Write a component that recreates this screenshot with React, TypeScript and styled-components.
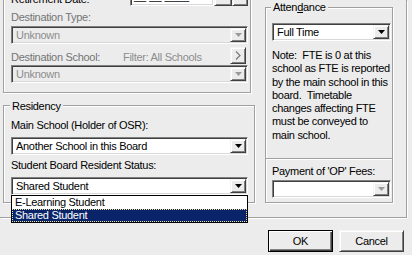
import styled, { createGlobalStyle, css } from "styled-components";

const FACE = "#ECECEC";
const ETCH = "#A0A0A0";
const DISABLED = "#8C8C8C";

const GlobalStyle = createGlobalStyle`
  html, body {
    margin: 0;
    padding: 0;
    background: ${FACE};
    overflow: hidden;
  }
  body {
    font-family: "Liberation Sans", Arial, sans-serif;
    font-size: 11px;
    line-height: 13px;
    letter-spacing: -0.3px;
    color: #000;
  }
`;

const Dialog = styled.div`
  display: flex;
  flex-direction: column;
  width: 412px;
  height: 255px;
  overflow: hidden;
`;

const TabPage = styled.div`
  display: flex;
  align-items: flex-start;
  box-sizing: border-box;
  width: 407px;
  height: 218px;
  border-right: 1px solid ${ETCH};
  border-bottom: 1px solid ${ETCH};
  box-shadow: 1px 1px 0 #fff;
`;

const LeftColumn = styled.div`
  display: flex;
  flex-direction: column;
  align-items: flex-start;
  gap: 12px;
  margin-left: 3px;
`;

const GroupBox = styled.div<{ $width: number }>`
  display: flex;
  flex-direction: column;
  align-items: flex-start;
  box-sizing: border-box;
  width: ${(p) => p.$width}px;
  border: 1px solid ${ETCH};
  box-shadow: inset 1px 1px 0 #fff, 1px 1px 0 #fff;
`;

const UpperGroup = styled(GroupBox)`
  margin-top: -30px;
  padding: 15px 0 9px 7px;
`;

const ResidencyGroup = styled(GroupBox)`
  padding: 0 0 7px 7px;
`;

const RightGroup = styled(GroupBox)`
  height: 196px;
  margin: 7px 0 0 10px;
  padding: 0 0 4px 6px;
`;

const Legend = styled.span<{ $lift: number }>`
  margin: -${(p) => p.$lift}px 0 0 -1px;
  padding: 0 2px;
  background: ${FACE};
  white-space: nowrap;
`;

const Label = styled.span<{ $mt?: number; $tone?: "normal" | "dim" | "disabled" }>`
  display: block;
  margin-top: ${(p) => p.$mt ?? 0}px;
  white-space: nowrap;
  color: ${(p) =>
    p.$tone === "disabled" ? DISABLED : p.$tone === "dim" ? "#747474" : "#000"};
`;

const sunken = css`
  border: 1px solid;
  border-color: #808080 #fff #fff #808080;
  box-shadow: inset 1px 1px 0 #404040, inset -1px -1px 0 #d8d8d8;
`;

const raised = css`
  border: 1px solid;
  border-color: #f4f4f4 #404040 #404040 #f4f4f4;
  box-shadow: inset 1px 1px 0 #fff, inset -1px -1px 0 #808080;
`;

const RetirementRow = styled.div`
  display: flex;
  align-items: flex-end;
  height: 20px;
`;

const RetirementLabel = styled.span`
  width: 119px;
  white-space: nowrap;
`;

const DateField = styled.div`
  ${sunken};
  box-sizing: border-box;
  display: flex;
  align-items: center;
  width: 84px;
  height: 20px;
  padding-left: 3px;
  background: #fff;
  letter-spacing: 0;
`;

const SmallButton = styled.span<{ $w: number; $h: number }>`
  ${raised};
  box-sizing: border-box;
  display: flex;
  align-items: center;
  justify-content: center;
  width: ${(p) => p.$w}px;
  height: ${(p) => p.$h}px;
  background: ${FACE};
`;

const SchoolRow = styled.div`
  display: flex;
  align-items: flex-start;
  width: 237px;
  height: 18px;
  margin-top: 3px;
`;

const SchoolLabel = styled(Label)`
  width: 112px;
`;

const ChevronButton = styled(SmallButton)`
  margin: 0 2px 0 auto;
`;

const ComboFrame = styled.div<{ $w: number; $h: number; $mt?: number; $disabled?: boolean }>`
  ${sunken};
  position: relative;
  box-sizing: border-box;
  display: flex;
  align-items: stretch;
  width: ${(p) => p.$w}px;
  height: ${(p) => p.$h}px;
  margin-top: ${(p) => p.$mt ?? 0}px;
  padding: 1px;
  background: ${(p) => (p.$disabled ? FACE : "#fff")};
`;

const ComboText = styled.span<{ $disabled?: boolean }>`
  flex: 1;
  display: flex;
  align-items: center;
  padding-left: 3px;
  white-space: nowrap;
  color: ${(p) => (p.$disabled ? DISABLED : "#000")};
`;

const ComboButton = styled.span`
  ${raised};
  box-sizing: border-box;
  display: flex;
  align-items: center;
  justify-content: center;
  width: 16px;
  background: ${FACE};
`;

const DropList = styled.div`
  position: absolute;
  top: calc(100% + 1px);
  left: -1px;
  z-index: 5;
  box-sizing: border-box;
  width: 237px;
  border: 1px solid #000;
  background: #fff;
`;

const ListItem = styled.div<{ $selected?: boolean }>`
  height: 13px;
  padding-left: 3px;
  white-space: nowrap;
  ${(p) =>
    p.$selected &&
    css`
      background: #0a246a;
      color: #fff;
      outline: 1px dotted #f3e39a;
      outline-offset: -1px;
    `}
`;

const NoteText = styled.div`
  margin-top: 8px;
  line-height: 13.3px;
  white-space: pre;
`;

const Divider = styled.div`
  align-self: stretch;
  height: 0;
  margin: auto 0 0 -6px;
  border-top: 1px solid ${ETCH};
  border-bottom: 1px solid #fff;
`;

const ButtonRow = styled.div`
  display: flex;
  justify-content: flex-end;
  gap: 6px;
  margin-top: 12px;
  padding-right: 8px;
`;

const PushButton = styled.button<{ $default?: boolean }>`
  ${raised};
  box-sizing: border-box;
  width: 65px;
  height: 22px;
  padding: 0;
  background: ${FACE};
  color: #000;
  font: inherit;
  letter-spacing: inherit;
  ${(p) =>
    p.$default &&
    css`
      border-color: #000;
      box-shadow: inset 1px 1px 0 #fff, inset -1px -1px 0 #404040, inset -2px -2px 0 #808080;
    `}
`;

function Arrow({ color = "#000" }: { color?: string }) {
  return (
    <svg width="7" height="4" viewBox="0 0 7 4">
      <path d="M0 0h7L3.5 4z" fill={color} />
    </svg>
  );
}

type ComboProps = {
  value: string;
  width: number;
  height?: number;
  mt?: number;
  disabled?: boolean;
  arrowDisabled?: boolean;
  children?: React.ReactNode;
};

function Combo({ value, width, height = 18, mt, disabled, arrowDisabled, children }: ComboProps) {
  return (
    <ComboFrame $w={width} $h={height} $mt={mt} $disabled={disabled}>
      <ComboText $disabled={disabled}>{value}</ComboText>
      <ComboButton>
        <Arrow color={disabled || arrowDisabled ? "#9a9a9a" : "#000"} />
      </ComboButton>
      {children}
    </ComboFrame>
  );
}

export default function App() {
  return (
    <Dialog>
      <GlobalStyle />
      <TabPage>
        <LeftColumn>
          <UpperGroup $width={248}>
            <RetirementRow>
              <RetirementLabel>Retirement Date:</RetirementLabel>
              <DateField>__/__/____</DateField>
              <SmallButton $w={18} $h={20}>
                <Arrow />
              </SmallButton>
              <SmallButton $w={16} $h={20} />
            </RetirementRow>
            <Label $mt={5} $tone="dim">
              Destination Type:
            </Label>
            <Combo value="Unknown" width={237} mt={2} disabled />
            <SchoolRow>
              <SchoolLabel $mt={4} $tone="dim">
                Destination School:
              </SchoolLabel>
              <Label $mt={4} $tone="disabled">
                Filter: All Schools
              </Label>
              <ChevronButton $w={16} $h={17}>
                <svg width="6" height="9" viewBox="0 0 6 9">
                  <path d="M1 0.5L5 4.5L1 8.5" fill="none" stroke="#7a7a7a" strokeWidth="1.2" />
                </svg>
              </ChevronButton>
            </SchoolRow>
            <Combo value="Unknown" width={237} disabled />
          </UpperGroup>

          <ResidencyGroup $width={252}>
            <Legend $lift={6}>Residency</Legend>
            <Label $mt={6}>Main School (Holder of OSR):</Label>
            <Combo value="Another School in this Board" width={237} mt={5} />
            <Label $mt={4}>Student Board Resident Status:</Label>
            <Combo value="Shared Student" width={237} mt={5}>
              <DropList>
                <ListItem>E-Learning Student</ListItem>
                <ListItem $selected>Shared Student</ListItem>
              </DropList>
            </Combo>
          </ResidencyGroup>
        </LeftColumn>

        <RightGroup $width={128}>
          <Legend $lift={7}>
            Atten<u>d</u>ance
          </Legend>
          <Combo value="Full Time" width={119} mt={9} />
          <NoteText>
            {"Note:  FTE is 0 at this\nschool as FTE is reported\nby the main school in this\nboard.  Timetable\nchanges affecting FTE\nmust be conveyed to\nmain school."}
          </NoteText>
          <Divider />
          <Label $mt={5}>Payment of 'OP' Fees:</Label>
          <Combo value="" width={119} mt={2} arrowDisabled />
        </RightGroup>
      </TabPage>

      <ButtonRow>
        <PushButton $default>OK</PushButton>
        <PushButton>Cancel</PushButton>
      </ButtonRow>
    </Dialog>
  );
}
